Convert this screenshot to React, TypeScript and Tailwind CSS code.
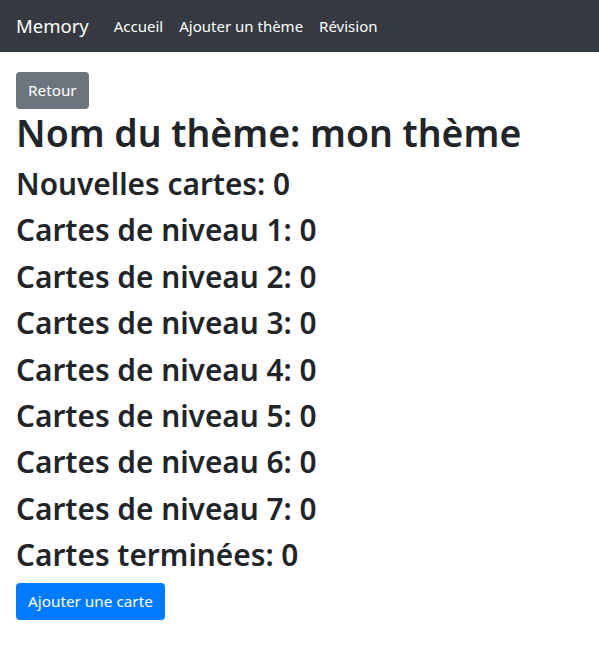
const levels = [1, 2, 3, 4, 5, 6, 7]

export default function App() {
  return (
    <div className="min-h-screen bg-white font-['Noto_Sans',sans-serif] text-[#212529]">
      {/* Navbar */}
      <nav className="flex h-[52px] items-center bg-[#343a40] px-4">
        <span className="mr-[17px] text-[18.5px] text-white">Memory</span>
        <a className="px-2 text-[15px] text-white">Accueil</a>
        <a className="px-2 text-[15px] text-white">Ajouter un thème</a>
        <a className="px-2 text-[15px] text-white">Révision</a>
      </nav>

      <div className="px-4 pt-5">
        <button className="h-[37px] rounded bg-[#6c757d] px-3 text-[15.3px] text-white">Retour</button>
        <h1 className="mb-2 text-[37.4px] font-semibold leading-[48px]">Nom du thème: mon thème</h1>
        <h2 className="mb-2 text-[29.8px] font-semibold leading-[38.4px]">Nouvelles cartes: 0</h2>
        {levels.map((n) => (
          <h2 key={n} className="mb-2 text-[29.8px] font-semibold leading-[38.4px]">
            Cartes de niveau {n}: 0
          </h2>
        ))}
        <h2 className="mb-2 text-[29.8px] font-semibold leading-[38.4px]">Cartes terminées: 0</h2>
        <button className="h-[37px] rounded bg-[#007bff] px-3 text-[15.3px] text-white">Ajouter une carte</button>
      </div>
    </div>
  )
}
